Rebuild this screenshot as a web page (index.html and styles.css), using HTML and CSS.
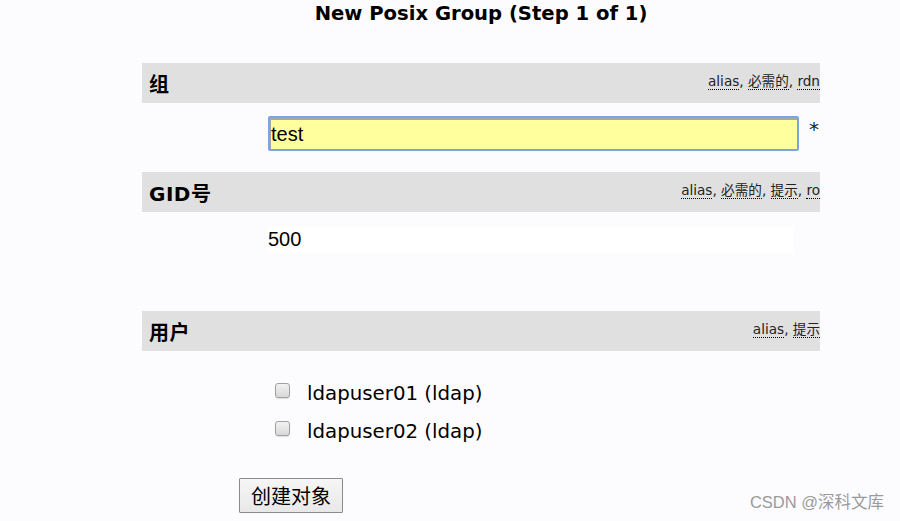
FILE: index.html
```html
<!DOCTYPE html>
<html lang="zh">
<head>
<meta charset="utf-8">
<title>New Posix Group</title>
<link rel="stylesheet" href="styles.css">
</head>
<body>
<div class="page">
  <h1 class="title">New Posix Group (Step 1 of 1)</h1>

  <div class="bar">
    <span class="bar-label">组</span>
    <span class="hints"><span class="hint">alias</span>, <span class="hint">必需的</span>, <span class="hint">rdn</span></span>
  </div>
  <div class="field-row">
    <input class="text-input" type="text" value="test">
    <span class="required">*</span>
  </div>

  <div class="bar">
    <span class="bar-label">GID号</span>
    <span class="hints"><span class="hint">alias</span>, <span class="hint">必需的</span>, <span class="hint">提示</span>, <span class="hint">ro</span></span>
  </div>
  <div class="value-row">
    <div class="value-box">500</div>
  </div>

  <div class="bar">
    <span class="bar-label">用户</span>
    <span class="hints"><span class="hint">alias</span>, <span class="hint">提示</span></span>
  </div>
  <div class="check-list">
    <label class="check-item"><input class="check" type="checkbox"><span class="check-text">ldapuser01 (ldap)</span></label>
    <label class="check-item"><input class="check" type="checkbox"><span class="check-text">ldapuser02 (ldap)</span></label>
  </div>

  <div class="actions">
    <button class="submit" type="button">创建对象</button>
  </div>
</div>
<div class="watermark">CSDN @深科文库</div>
</body>
</html>
```

FILE: styles.css
```css
html, body {
  margin: 0;
  padding: 0;
}
body {
  background: #fcfcfe;
  color: #000;
  font-family: "DejaVu Sans", Verdana, "Noto Sans CJK SC", sans-serif;
  width: 900px;
  height: 521px;
  overflow: hidden;
  position: relative;
}
.page {
  margin-left: 142px;
  width: 678px;
}
.title {
  margin: 0;
  padding-top: 2px;
  height: 63px;
  box-sizing: border-box;
  text-align: center;
  font-size: 19.6px;
  font-weight: bold;
  line-height: 24px;
  font-family: "DejaVu Sans", Verdana, sans-serif;
}
.bar {
  height: 40px;
  background: #e0e0e0;
  display: flex;
  align-items: center;
  overflow: hidden;
  white-space: nowrap;
}
.bar-label {
  padding-left: 7px;
  font-weight: bold;
  font-size: 20px;
  letter-spacing: 0.5px;
  font-family: "DejaVu Sans", "Noto Sans CJK SC", sans-serif;
}
.hints {
  margin-left: auto;
  font-size: 13.6px;
  color: #222;
  margin-bottom: 7px;
  font-family: "DejaVu Sans", "Noto Sans CJK SC", sans-serif;
}
.hint {
  border-bottom: 1px dotted #000;
}
.field-row {
  height: 69px;
  display: flex;
  align-items: flex-start;
  padding-top: 13px;
  box-sizing: border-box;
  padding-left: 126px;
}
.text-input {
  width: 531px;
  height: 35px;
  box-sizing: border-box;
  margin: 0;
  background: #ffff9e;
  border: 2px solid #7ba2ea;
  border-radius: 2px;
  box-shadow: inset 1px 2px 0 #a8a8a0;
  font-family: "Liberation Sans", Arial, sans-serif;
  font-size: 20px;
  padding: 2px 0 0 1px;
  color: #000;
  outline: none;
}
.required {
  margin-left: 10px;
  margin-top: 1px;
  font-size: 20px;
  color: #222;
  font-family: "DejaVu Sans", sans-serif;
}
.value-row {
  height: 99px;
  padding-top: 14px;
  padding-left: 126px;
  box-sizing: border-box;
}
.value-box {
  width: 525px;
  height: 27px;
  background: #ffffff;
  font-family: "Liberation Sans", Arial, sans-serif;
  font-size: 20px;
  line-height: 27px;
}
.check-list {
  padding-top: 26px;
  padding-left: 133px;
  display: flex;
  flex-direction: column;
  gap: 6px;
  height: 127px;
  box-sizing: border-box;
}
.check-item {
  display: flex;
  align-items: center;
  height: 32px;
}
.check {
  appearance: none;
  -webkit-appearance: none;
  width: 15px;
  height: 15px;
  margin: 0 17px 5px 0;
  border: 1px solid #a0a0a0;
  border-radius: 3px;
  background: linear-gradient(#f2f2f2, #d8d8d8);
  box-shadow: 0 1px 1px rgba(0,0,0,0.12);
  box-sizing: border-box;
}
.check-text {
  font-size: 19.8px;
  font-family: "DejaVu Sans", Verdana, sans-serif;
}
.actions {
  padding-left: 97px;
}
.submit {
  height: 35px;
  width: 104px;
  padding: 0;
  border: 1px solid #8a8a8a;
  border-radius: 1px;
  background: linear-gradient(#f6f6f6, #e8e8e8);
  font-family: "Noto Sans CJK SC", sans-serif;
  font-size: 20px;
  color: #000;
}
.watermark {
  position: absolute;
  right: 16px;
  bottom: 8px;
  font-family: "Liberation Sans", "Noto Sans CJK SC", sans-serif;
  font-size: 16.5px;
  color: #9a9a9a;
}
```
